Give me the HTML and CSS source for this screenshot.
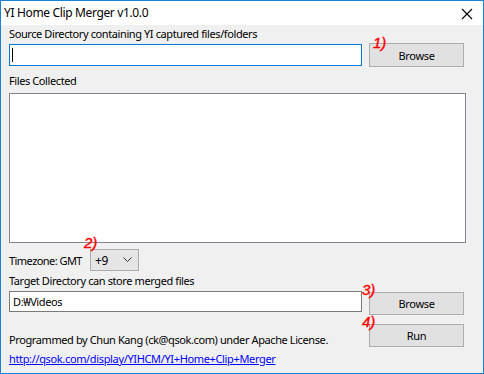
FILE: index.html
```html
<!DOCTYPE html>
<html lang="en">
<head>
    <meta charset="UTF-8">
    <title>YI Home Clip Merger v1.0.0</title>
    <link rel="stylesheet" href="styles.css">
</head>
<body>

<div class="window">
    <div class="titlebar">
        <span class="title">YI Home Clip Merger v1.0.0</span>
        <svg class="close" width="12" height="12" viewBox="0 0 12 12">
            <path d="M1 1 L11 11 M11 1 L1 11" stroke="#000" stroke-width="1.1" fill="none"/>
        </svg>
    </div>

    <div class="content">
        <div class="label first">Source Directory containing YI captured files/folders</div>
        <div class="row">
            <div class="field focused"><span class="caret"></span></div>
            <button class="btn">Browse</button>
        </div>

        <div class="label files">Files Collected</div>
        <div class="listbox"></div>

        <div class="tz-row">
            <span class="label tz">Timezone: GMT</span>
            <div class="combo">
                <span>+9</span>
                <svg width="9" height="6" viewBox="0 0 9 6">
                    <path d="M0.5 0.5 L4.5 4.5 L8.5 0.5" stroke="#333" stroke-width="1" fill="none"/>
                </svg>
            </div>
        </div>

        <div class="label target">Target Directory can store merged files</div>
        <div class="row row-top">
            <div class="field">D:₩Videos</div>
            <button class="btn btn-low">Browse</button>
        </div>

        <div class="row row-bottom">
            <span class="label">Programmed by Chun Kang (ck@qsok.com) under Apache License.</span>
            <button class="btn">Run</button>
        </div>
        <a class="link" href="#">http://qsok.com/display/YIHCM/YI+Home+Clip+Merger</a>
    </div>

    <span class="note n1">1)</span>
    <span class="note n2">2)</span>
    <span class="note n3">3)</span>
    <span class="note n4">4)</span>
</div>

</body>
</html>
```

FILE: styles.css
```css
body {
    margin: 0;
    font-family: "Noto Sans", "Open Sans", sans-serif;
    font-size: 11px;
    letter-spacing: -0.4px;
    color: #000;
}

.window {
    position: relative;
    width: 484px;
    height: 374px;
    box-sizing: border-box;
    border: 1px solid #1883d7;
    background: #f0f0f0;
    display: flex;
    flex-direction: column;
}

.titlebar {
    height: 24px;
    background: #fff;
    display: flex;
    align-items: center;
    justify-content: space-between;
    padding: 0 10px 0 3px;
}

.title {
    font-size: 12px;
    letter-spacing: -0.35px;
    line-height: 15px;
    padding-bottom: 1px;
}

.close {
    margin-top: 1px;
}

.content {
    padding: 0 17px 0 8px;
}

.label {
    line-height: 15px;
    white-space: nowrap;
}

.label.first {
    margin-top: 1px;
}

.row {
    display: flex;
    justify-content: space-between;
    align-items: center;
    margin-top: 2px;
    padding-right: 2px;
}

.field {
    width: 353px;
    height: 22px;
    box-sizing: border-box;
    border: 1px solid #7a7a7a;
    background: #fff;
    padding: 0 3px;
    line-height: 19px;
    display: flex;
    align-items: center;
}

.field.focused {
    border-color: #0078d7;
}

.caret {
    width: 1px;
    height: 14px;
    background: #000;
    margin-left: -1px;
}

.btn {
    width: 95px;
    height: 24px;
    box-sizing: border-box;
    border: 1px solid #adadad;
    background: #e1e1e1;
    font-family: inherit;
    font-size: 11px;
    letter-spacing: -0.3px;
    color: #000;
    padding: 0;
}

.label.files {
    margin-top: 6px;
}

.listbox {
    height: 150px;
    box-sizing: border-box;
    border: 1px solid #828790;
    background: #fff;
    margin-top: 5px;
}

.tz-row {
    display: flex;
    align-items: center;
    margin-top: 6px;
}

.label.tz {
    letter-spacing: -0.55px;
}

.combo {
    margin-left: 8px;
    width: 49px;
    height: 22px;
    box-sizing: border-box;
    border: 1px solid #acacac;
    background: #e5e5e5;
    display: flex;
    align-items: center;
    justify-content: space-between;
    padding: 0 6px 0 4px;
    font-size: 12px;
}

.label.target {
    margin-top: 2px;
}

.row-top {
    align-items: flex-start;
    margin-top: 3px;
}

.row-top .field {
    height: 21px;
}

.btn-low {
    height: 23px;
    margin-top: 1px;
}

.row-bottom {
    align-items: flex-end;
    margin-top: 9px;
}

.row-bottom .btn {
    height: 23px;
}

.link {
    display: block;
    margin-top: 4px;
    line-height: 15px;
    letter-spacing: -0.35px;
    color: #0000ff;
}

.note {
    position: absolute;
    font-family: "Liberation Sans", sans-serif;
    font-style: italic;
    font-size: 15px;
    line-height: 15px;
    letter-spacing: 0;
    color: #ff0000;
    -webkit-text-stroke: 0.4px #ff0000;
}

.n1 { left: 372px; top: 34px; }
.n2 { left: 83px; top: 234px; }
.n3 { left: 361px; top: 281px; }
.n4 { left: 361px; top: 313px; }
```
